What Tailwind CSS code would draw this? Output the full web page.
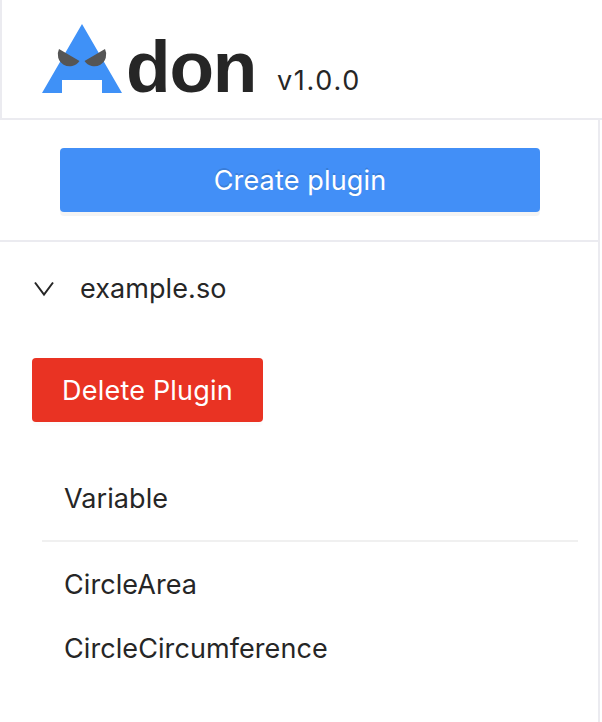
<!DOCTYPE html>
<html lang="en">
<head>
<meta charset="utf-8">
<title>Adon</title>
<script src="https://cdn.jsdelivr.net/npm/@tailwindcss/browser@4"></script>
</head>
<body class="bg-white">
<div class="flex h-[722px] w-[602px] flex-col overflow-hidden bg-white font-['Inter',sans-serif] text-[27px] leading-[44px] tracking-[0.08px] text-[#262626]">
  <header class="flex h-[120px] shrink-0 items-start border-b-2 border-[#ebebf0]">
    <div class="h-full w-0.5 shrink-0 bg-[#ebebf0]"></div>
    <svg class="ml-10 mt-6 h-[69px] w-20 shrink-0" viewBox="0 0 80 69" aria-hidden="true">
      <path fill="#3f91f7" d="M40 0L80 69H60V56H20V69H0Z"/>
      <path fill="#555" d="M17 25L37.500 37A11.900 11.900 0 0 1 17 25ZM63 25L42.500 37A11.900 11.900 0 0 0 63 25Z"/>
    </svg>
    <h1 class="ml-1 mt-[23px] w-[151px] shrink-0 font-['Liberation_Sans',sans-serif] text-[73px] font-bold leading-[88px] tracking-[-1.2px]">don</h1>
    <span class="mt-[59px] tracking-[1.7px]">v1.0.0</span>
  </header>
  <aside class="flex w-[600px] flex-1 flex-col border-r-2 border-[#ebebf0]">
    <div class="h-[122px] shrink-0 border-b-2 border-[#ebebf0] px-[60px] pt-7 pr-[58px]">
      <button class="flex h-16 w-full items-center justify-center rounded-[4px] bg-[#428ff7] pt-px tracking-[0.15px] text-white shadow-[0_4px_0_rgba(0,0,0,0.045)] [text-shadow:0_-2px_0_rgba(0,0,0,0.12)]">Create plugin</button>
    </div>
    <div class="flex h-[92px] shrink-0 items-center pl-[34px] pt-0.5">
      <svg class="h-4 w-5" viewBox="0 0 20 16" fill="none" stroke="#262626" stroke-width="2" aria-hidden="true"><path d="M1 1.500L10 13.500L19 1.500"/></svg>
      <span class="ml-[26px]">example.so</span>
    </div>
    <div class="pl-8 pt-6">
      <button class="flex h-16 w-[231px] items-center justify-center rounded-[4px] bg-[#e93323] pt-px tracking-[0.2px] text-white shadow-[0_4px_0_rgba(0,0,0,0.01)]">Delete Plugin</button>
    </div>
    <div class="ml-[42px] mr-5 mt-[34px] flex h-[86px] items-center border-b-2 border-[#f0f0f0] pl-[22px] pt-0.5">Variable</div>
    <ul class="pl-16 pt-[11px]">
      <li class="flex h-16 items-center">CircleArea</li>
      <li class="flex h-16 items-center">CircleCircumference</li>
    </ul>
  </aside>
</div>
</body>
</html>
